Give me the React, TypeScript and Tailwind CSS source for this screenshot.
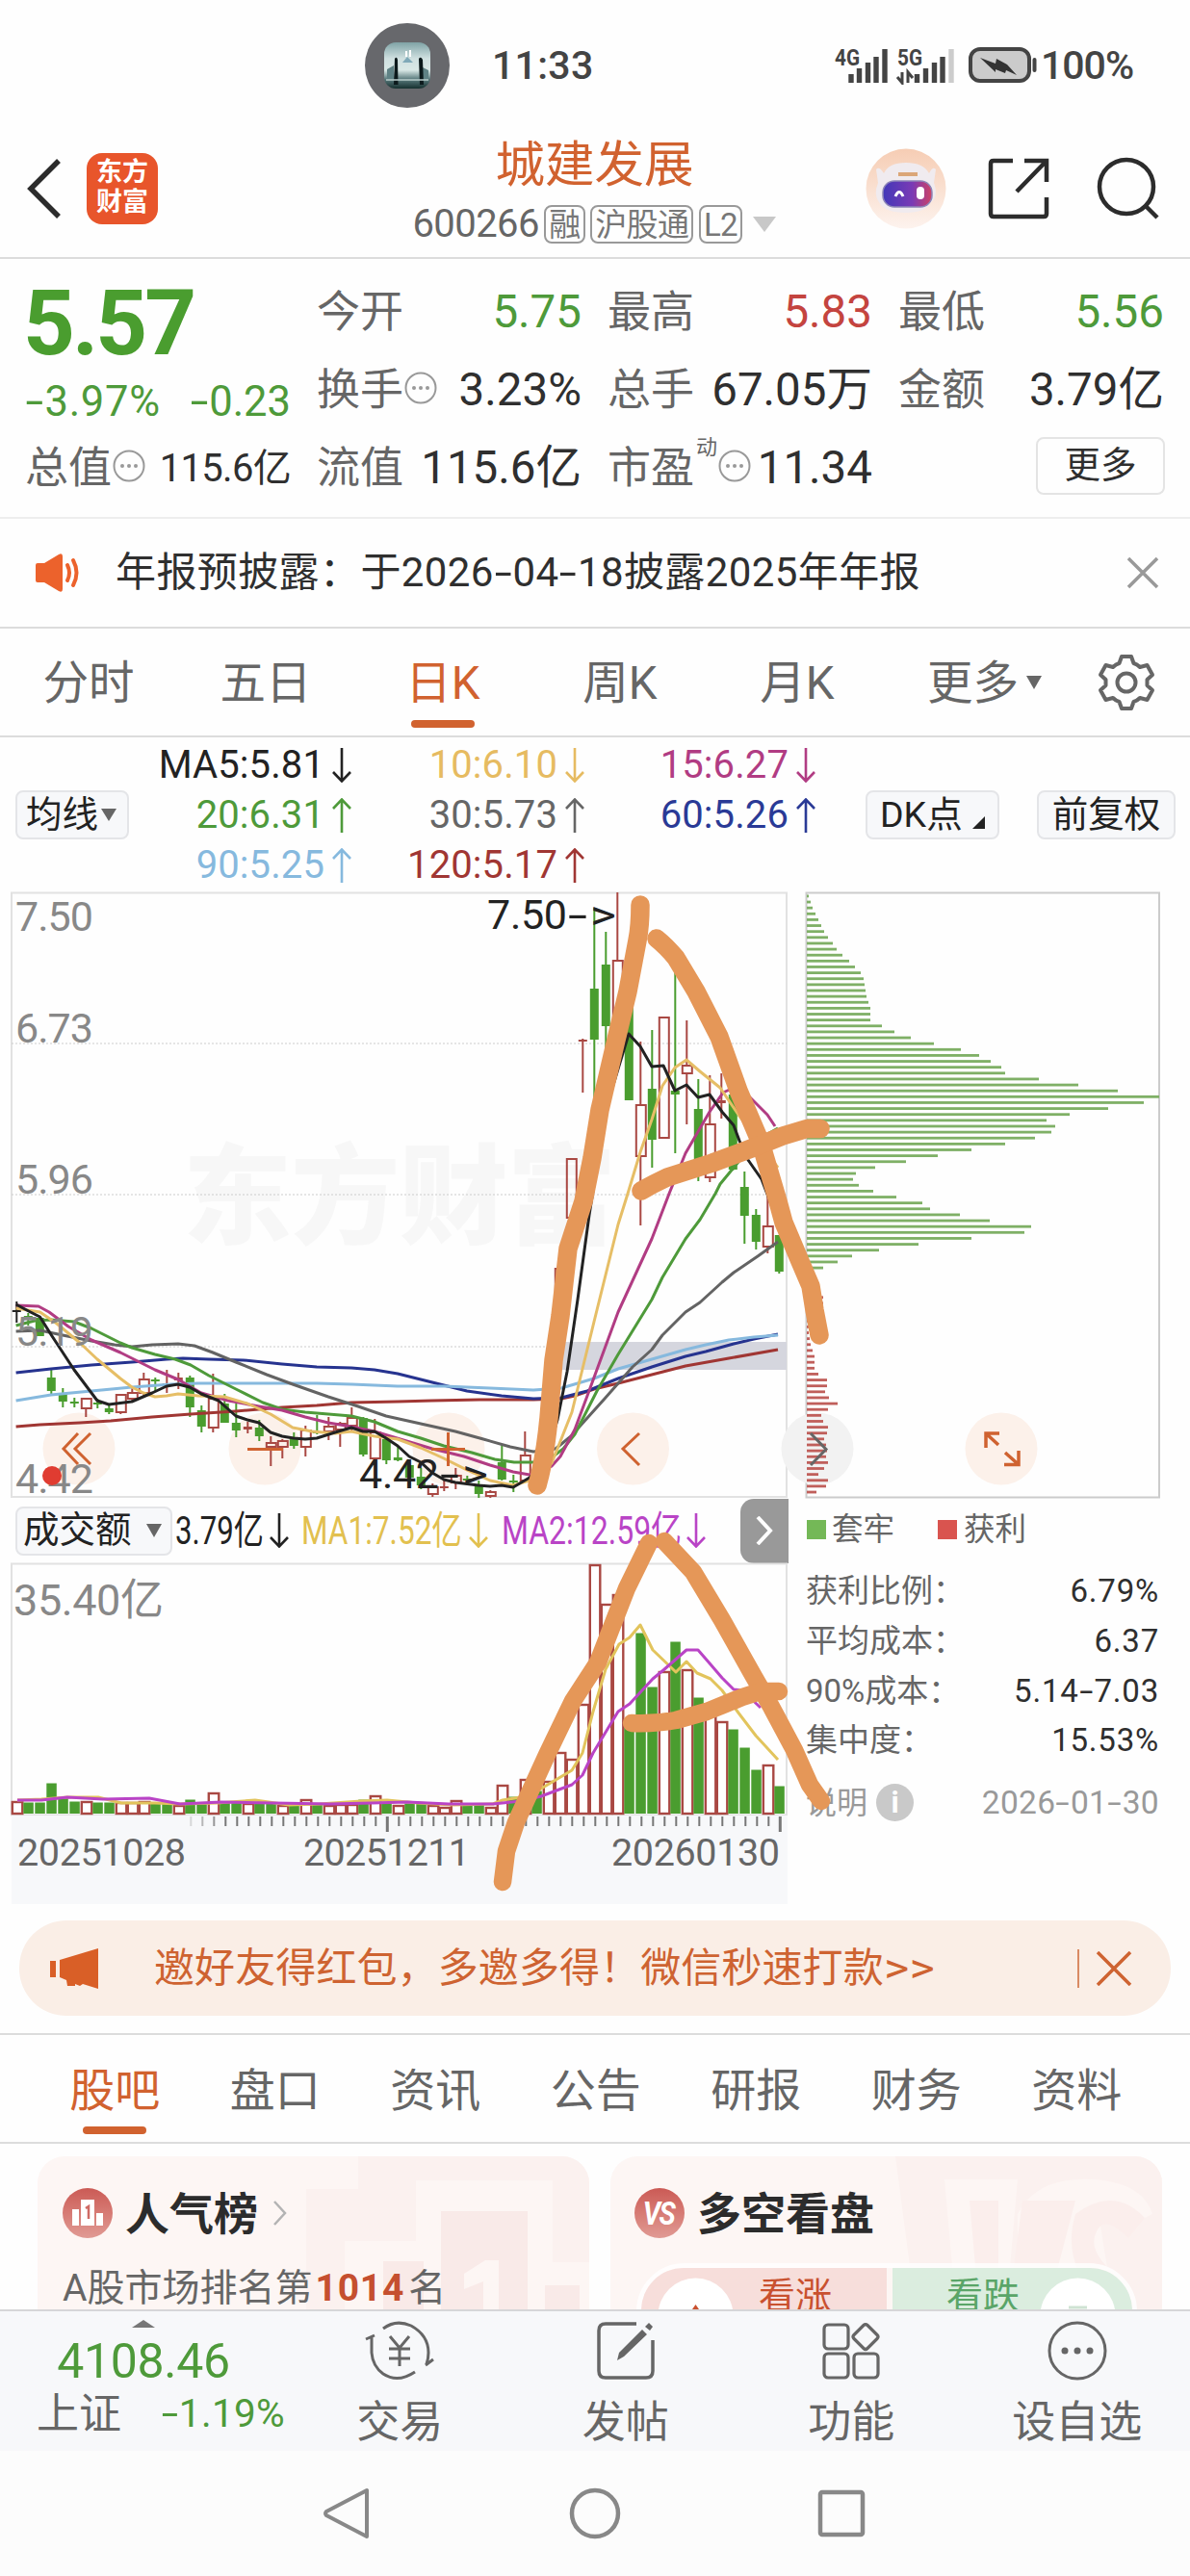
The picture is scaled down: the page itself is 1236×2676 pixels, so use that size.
import React from 'react';

type Dir = 'up' | 'down';
// [kind, high, low, bodyTop, bodyBottom]
type Candle = ['r' | 'g' | 'k', number, number, number, number];

const RED = '#a94843';
const GREEN = '#4a9d2f';
const BRUSH = '#e59758';

const candleX = (i: number) => 17.3 + i * 12;

const candles: (Candle | null)[] = [
  ['k', 1352, 1374, 1361, 1363],
  ['g', 1364, 1377, 1367, 1369],
  ['g', 1368, 1388, 1369, 1388],
  ['g', 1423, 1448, 1431, 1445],
  ['g', 1442, 1462, 1447, 1456],
  ['g', 1452, 1462, 1456, 1458],
  ['r', 1452, 1472, 1453, 1463],
  ['g', 1453, 1463, 1457, 1459],
  ['g', 1460, 1469, 1463, 1467],
  ['r', 1449, 1469, 1449, 1467],
  ['r', 1442, 1455, 1447, 1453],
  ['r', 1426, 1450, 1433, 1447],
  ['g', 1431, 1446, 1433, 1435],
  ['r', 1423, 1447, 1437, 1439],
  ['r', 1426, 1443, 1431, 1434],
  ['g', 1429, 1472, 1431, 1462],
  ['g', 1460, 1488, 1465, 1482],
  ['r', 1427, 1488, 1453, 1483],
  ['g', 1448, 1478, 1458, 1478],
  ['g', 1458, 1493, 1478, 1486],
  ['r', 1477, 1489, 1482, 1485],
  ['g', 1475, 1497, 1483, 1492],
  ['r', 1492, 1523, 1499, 1503],
  ['r', 1495, 1515, 1497, 1503],
  ['g', 1488, 1505, 1495, 1502],
  ['r', 1481, 1513, 1486, 1503],
  ['g', 1470, 1490, 1487, 1489],
  ['r', 1472, 1496, 1482, 1487],
  ['r', 1477, 1503, 1479, 1485],
  ['r', 1462, 1487, 1473, 1481],
  ['g', 1472, 1513, 1473, 1511],
  ['r', 1474, 1516, 1488, 1515],
  ['g', 1493, 1521, 1495, 1517],
  ['g', 1502, 1518, 1514, 1517],
  ['g', 1521, 1543, 1522, 1535],
  ['g', 1525, 1547, 1534, 1543],
  ['r', 1541, 1555, 1545, 1552],
  ['r', 1538, 1549, 1544, 1546],
  ['r', 1525, 1547, 1533, 1540],
  ['g', 1533, 1542, 1536, 1538],
  ['g', 1538, 1556, 1542, 1552],
  ['r', 1548, 1556, 1550, 1554],
  ['g', 1501, 1538, 1519, 1537],
  ['g', 1532, 1550, 1538, 1540],
  ['r', 1487, 1540, 1512, 1538],
  null,
  null,
  ['r', 1318, 1370, 1318, 1370],
  ['r', 1204, 1265, 1204, 1265],
  ['r', 1079, 1135, 1080, 1080],
  ['g', 943, 1145, 1027, 1080],
  ['g', 968, 1092, 1002, 1066],
  ['r', 927, 1060, 998, 1060],
  ['g', 1045, 1143, 1045, 1143],
  ['r', 1082, 1273, 1148, 1201],
  ['g', 1070, 1213, 1131, 1184],
  ['r', 1057, 1182, 1057, 1182],
  ['g', 1005, 1198, 1133, 1137],
  ['r', 1060, 1168, 1107, 1115],
  ['g', 1121, 1227, 1152, 1217],
  ['r', 1117, 1228, 1168, 1223],
  ['r', 1115, 1162, 1143, 1146],
  ['g', 1133, 1216, 1137, 1215],
  ['g', 1217, 1292, 1233, 1263],
  ['g', 1256, 1298, 1262, 1290],
  ['r', 1225, 1302, 1274, 1295],
  ['g', 1283, 1323, 1283, 1321],
];

const maLines: { color: string; points: string }[] = [
  {
    color: '#a03633',
    points:
      '16.6,1482 41.5,1480 83,1478 115,1476 158,1472 198,1469 245,1466 293,1462 329,1460 365,1457 413,1456 449,1455 498,1454 554,1454 583,1453 597,1450 617,1443 642,1437 677,1428 712,1419 757,1411 808,1402',
  },
  {
    color: '#26338f',
    points:
      '16.6,1426 53,1422 95,1418 137,1415 173,1412 190,1411 217,1412 253,1413 293,1417 329,1420 365,1421 389,1423 413,1427 449,1436 485,1445 521,1450 554,1453 583,1452 610,1445 642,1432 677,1420 712,1409 733,1404 762,1396 783,1391 808,1386',
  },
  {
    color: '#86b9de',
    points:
      '16.6,1455 53,1449 95,1445 137,1441 178,1438 206,1437 245,1437 293,1437 329,1437 365,1438 413,1440 461,1440 509,1442 554,1444 583,1442 617,1432 642,1422 677,1412 712,1402 733,1397 757,1392 783,1389 808,1387',
  },
  {
    color: '#636363',
    points:
      '16.6,1383 41.5,1382 65,1387 95,1393 119,1397 137,1399 158,1397 185,1396 202,1398 221,1405 245,1415 277,1428 304,1438 341,1451 372,1461 401,1471 437,1479 473,1487 502,1495 530,1503 554,1508 577,1505 593,1492 610,1473 628,1453 657,1420 677,1402 688,1387 712,1363 727,1353 750,1332 762,1322 787,1305 808,1290',
  },
  {
    color: '#4e9a3a',
    points:
      '16.6,1377 36,1372 53,1371 77,1373 95,1380 125,1395 137,1400 161,1407 182,1412 198,1418 217,1429 245,1443 273,1457 293,1464 317,1467 341,1469 365,1471 389,1477 413,1487 437,1494 461,1502 490,1509 514,1516 534,1519 554,1519 573,1514 585,1505 597,1490 620,1445 642,1407 677,1350 688,1327 712,1287 727,1267 743,1240 748,1230 762,1213 785,1185 808,1172',
  },
  {
    color: '#b13c83',
    points:
      '16.6,1356 40,1357 51,1363 71,1378 95,1392 125,1405 161,1423 185,1433 209,1447 237,1455 269,1461 293,1465 317,1472 341,1478 365,1482 389,1487 419,1496 449,1505 482,1513 509,1522 533,1529 550,1532 573,1523 582,1513 597,1485 610,1450 642,1363 677,1287 695,1240 712,1198 737,1155 751,1135 762,1130 777,1138 797,1158 805,1170',
  },
  {
    color: '#e6be66',
    points:
      '16.6,1359 41.5,1363 59,1375 83,1395 101,1412 125,1432 137,1441 149,1447 161,1451 173,1450 185,1448 206,1450 233,1451 257,1458 281,1469 304,1483 324,1487 348,1489 365,1487 389,1492 413,1495 437,1504 461,1515 485,1527 509,1538 533,1543 550,1538 573,1520 594,1467 617,1373 642,1272 652,1240 665,1197 677,1163 688,1128 701,1109 713,1101 727,1113 748,1130 767,1158 808,1213',
  },
  {
    color: '#222222',
    points:
      '16.6,1355 29.7,1362 41.5,1368 53.4,1387 77,1423 101,1455 113,1459 137,1456 158,1447 173,1440 185,1438 197,1441 209,1448 227,1455 245,1471 257,1475 269,1478 281,1488 293,1492 305,1494 317,1495 329,1494 348,1488 365,1483 377,1487 389,1487 401,1494 413,1502 425,1513 437,1519 449,1530 461,1537 473,1540 497,1543 509,1544 521,1543 533,1545 550,1535 565,1520 579,1475 589,1425 600,1350 612,1262 630,1150 653,1074 665,1087 677,1108 689,1107 701,1133 713,1127 725,1140 737,1137 750,1155 762,1169 768,1185 777,1205 791,1225 809,1272',
  },
];

const volumes: ['r' | 'g', number][] = [
  ['r', 1871], ['g', 1872], ['g', 1872], ['g', 1852], ['g', 1867], ['g', 1871], ['r', 1871], ['g', 1872],
  ['g', 1872], ['r', 1872], ['r', 1872], ['r', 1871], ['g', 1873], ['g', 1872], ['r', 1875], ['g', 1869],
  ['g', 1872], ['r', 1862], ['g', 1871], ['g', 1872], ['r', 1873], ['g', 1873], ['g', 1872], ['r', 1875],
  ['g', 1875], ['r', 1869], ['g', 1873], ['r', 1875], ['r', 1874], ['r', 1874], ['g', 1869], ['r', 1865],
  ['g', 1873], ['r', 1875], ['g', 1873], ['g', 1873], ['r', 1875], ['r', 1877], ['r', 1870], ['g', 1875],
  ['g', 1873], ['r', 1877], ['r', 1854], ['g', 1866], ['r', 1848], ['g', 1860], ['r', 1850], ['r', 1820],
  ['r', 1827], ['r', 1770], ['r', 1625], ['r', 1666], ['r', 1656], ['g', 1790], ['g', 1696], ['g', 1752],
  ['r', 1736], ['g', 1705], ['r', 1734], ['g', 1763], ['r', 1775], ['r', 1788], ['g', 1796], ['g', 1815],
  ['g', 1838], ['r', 1833], ['g', 1855],
];

// bar widths of the cost distribution, top to bottom
const trapped = [
  2, 4, 6, 9, 12, 15, 18, 22, 27, 31, 37, 44, 50, 56, 59, 60, 61, 62, 64, 66, 66, 66, 78, 91, 108, 132, 160, 179,
  191, 202, 206, 241, 282, 323, 366, 350, 313, 273, 249, 258, 254, 237, 206, 171, 136, 103, 71, 51, 48, 54, 69, 93,
  120, 128, 159, 190, 233, 226, 171, 116, 75, 47, 32, 17,
];
const profit = [
  17, 17, 15, 10, 5, 2, 2, 3, 4, 6, 8, 8, 8, 12, 21, 21, 19, 23, 32, 22, 15, 17, 22, 21, 18, 20, 21, 20, 22, 18, 12,
  22, 20, 10,
];

const maLegend: ({ text: string; dir: Dir; color: string } | null)[] = [
  { text: 'MA5:5.81', dir: 'down', color: 'text-[#222]' },
  { text: '10:6.10', dir: 'down', color: 'text-[#e6bb61]' },
  { text: '15:6.27', dir: 'down', color: 'text-[#b13c83]' },
  { text: '20:6.31', dir: 'up', color: 'text-[#4e9a3a]' },
  { text: '30:5.73', dir: 'up', color: 'text-[#666]' },
  { text: '60:5.26', dir: 'up', color: 'text-[#2a3a96]' },
  { text: '90:5.25', dir: 'up', color: 'text-[#86b9de]' },
  { text: '120:5.17', dir: 'up', color: 'text-[#a03633]' },
  null,
];

const Arrow: React.FC<{ dir: Dir }> = ({ dir }) => (
  <svg className="shrink-0" width="22" height="36" viewBox="0 0 22 36" fill="none" stroke="currentColor" strokeWidth="2.6">
    {dir === 'down' ? <path d="M11 0V34M2 25L11 34.5L20 25" /> : <path d="M11 36V2M2 11L11 1.5L20 11" />}
  </svg>
);

// figures with the hyphen widened to the width of a digit dash
const Num: React.FC<{ children: string }> = ({ children }) => (
  <span>
    {children.split('-').map((part, i) => (
      <React.Fragment key={i}>
        {i > 0 && <span className="mx-[0.09em] inline-block scale-x-[1.55]">-</span>}
        {part}
      </React.Fragment>
    ))}
  </span>
);

const Dots = () => (
  <svg width="34" height="34" viewBox="0 0 34 34" className="-mt-1.5 ml-[1px] shrink-0">
    <circle cx="17" cy="17" r="15.500" fill="none" stroke="#999" strokeWidth="2" />
    <circle cx="10" cy="17" r="2" fill="#999" />
    <circle cx="17" cy="17" r="2" fill="#999" />
    <circle cx="24" cy="17" r="2" fill="#999" />
  </svg>
);

const StatusBar = () => (
  <div className="flex h-[136px] items-center pl-[379px] text-[41px] font-medium leading-none text-[#444]">
    <div className="flex h-[88px] w-[88px] items-center justify-center rounded-full bg-[#67686c]">
      <svg width="48" height="48" viewBox="0 0 48 48">
        <defs>
          <linearGradient id="sky" x1="0" y1="0" x2="0" y2="1">
            <stop offset="0" stopColor="#7fa3a6" />
            <stop offset="0.35" stopColor="#cfe0e0" />
            <stop offset="0.6" stopColor="#d9e8e6" />
            <stop offset="0.8" stopColor="#58797b" />
            <stop offset="1" stopColor="#16302f" />
          </linearGradient>
        </defs>
        <rect width="48" height="48" rx="12" fill="url(#sky)" />
        <path d="M3 28L10 24V38H3ZM38 25L46 29V38H40Z" fill="#5f8285" />
        <path d="M19 21L24 15L30 21Z" fill="#7fa9b8" />
        <path d="M23 9V15M27 8V15" stroke="#fff" strokeWidth="2" />
        <path d="M11 17Q13 14 14 18L14.5 44H10ZM36 17Q38 14 40 18L41 44H37Z" fill="#0c1a1c" />
        <path d="M2 39H46" stroke="#b9cccb" strokeWidth="1.5" />
      </svg>
    </div>
    <span className="ml-[44px] w-[108px] whitespace-nowrap tracking-[0.3px]">11:33</span>
    <svg className="ml-[247px]" width="212" height="40" viewBox="866 48 212 40">
      <text x="867" y="68" fontSize="23" fontWeight="700" fill="#444" textLength="26" lengthAdjust="spacingAndGlyphs">4G</text>
      <path d="M884 86V77M892.5 86V71M901.5 86V65M910 86V59M919 86V51" stroke="#444" strokeWidth="5.4" />
      <text x="932" y="68" fontSize="23" fontWeight="700" fill="#444" textLength="26" lengthAdjust="spacingAndGlyphs">5G</text>
      <path d="M937 75V86L932 80M943 86V75L948 81" fill="none" stroke="#444" strokeWidth="3" />
      <path d="M952.5 86V77M961.5 86V71M970.5 86V65M979 86V59" stroke="#444" strokeWidth="5.4" />
      <path d="M988 86V51" stroke="#ccc" strokeWidth="5.4" />
      <rect x="1008" y="51" width="61" height="33" rx="10" fill="#cbcbcb" stroke="#444" strokeWidth="4" />
      <path d="M1018 60L1034 66L1035 61L1046 67L1056 78L1045 73L1044 76L1034 72L1034 75Z" fill="#333" />
      <path d="M1074.500 62V73" stroke="#444" strokeWidth="4" strokeLinecap="round" />
    </svg>
    <span className="ml-[3px] tracking-[-1px]">100%</span>
  </div>
);

const Tag: React.FC<{ children: React.ReactNode }> = ({ children }) => (
  <span className="flex h-10 items-center rounded-lg border-2 border-[#999] px-[3px] text-[33px] leading-none tracking-[-0.6px] text-[#777]">
    {children}
  </span>
);

const Header = () => (
  <header className="flex h-[133px] border-b-2 border-[#dcdcdc]">
    <div className="flex h-[120px] w-[360px] items-center pl-[28px]">
      <svg width="36" height="62" viewBox="0 0 36 62" fill="none" stroke="#2c2c2c" strokeWidth="5.500">
        <path d="M33 2L4 31L33 60" />
      </svg>
      <div className="ml-[26px] flex h-[74px] w-[74px] flex-col items-center justify-center rounded-[16px] bg-[#e8552b] pb-[2px] text-[27px] font-bold leading-[31px] text-white">
        <span>东方</span>
        <span>财富</span>
      </div>
    </div>
    <div className="flex w-[515px] flex-col items-center">
      <h1 className="mt-[6px] h-[67px] text-[51.500px] leading-[60px] text-[#d1622f]">城建发展</h1>
      <div className="flex h-12 items-center gap-[5.500px] text-[40px] leading-none text-[#666]">
        <span className="tracking-[-0.6px]">600266</span>
        <Tag>融</Tag>
        <Tag>沪股通</Tag>
        <Tag>L2</Tag>
        <svg className="ml-1" width="26" height="16" viewBox="0 0 26 16">
          <path d="M1 0H25L13 16Z" fill="#c8c8c8" />
        </svg>
      </div>
    </div>
    <div className="flex h-[120px] w-[361px] items-center pl-[24px]">
      <svg width="84" height="84" viewBox="0 0 84 84">
        <defs>
          <linearGradient id="halo" x1="0" y1="0" x2="0" y2="1">
            <stop offset="0" stopColor="#f6cdb4" />
            <stop offset="1" stopColor="#fdf3ee" />
          </linearGradient>
          <linearGradient id="visor" x1="0" y1="0" x2="1" y2="0">
            <stop offset="0" stopColor="#4238b8" />
            <stop offset="0.6" stopColor="#7a3ab5" />
            <stop offset="1" stopColor="#cf4264" />
          </linearGradient>
        </defs>
        <circle cx="42" cy="42" r="41.500" fill="url(#halo)" />
        <path d="M11 22Q14 18 19 26Q24 15 42 15Q60 15 66 26Q70 18 73 22L71 36Q76 50 68 56Q62 67 42 67Q20 67 14 56Q8 48 13 36Z" fill="#f0ebef" />
        <path d="M34 25H54V29H34Z" fill="#dba678" />
        <rect x="18" y="34" width="51" height="27" rx="12" fill="url(#visor)" stroke="#8d86b8" strokeWidth="1.500" />
        <path d="M31 50Q35 41 39 50" fill="none" stroke="#fff" strokeWidth="3" />
        <rect x="53" y="40" width="8" height="13" rx="4" fill="#fff" />
      </svg>
      <svg className="ml-[43px]" width="64" height="66" viewBox="0 0 64 66" fill="none" stroke="#2c2c2c" strokeWidth="4.500">
        <path d="M26 4H6Q3 4 3 7V59Q3 62 6 62H58Q61 62 61 59V42M38 4H61V26M61 4L30 36" />
      </svg>
      <svg className="ml-[49px]" width="66" height="66" viewBox="0 0 66 66" fill="none" stroke="#2c2c2c" strokeWidth="4.500">
        <circle cx="31" cy="31" r="28" />
        <path d="M51 51L63 63" />
      </svg>
    </div>
  </header>
);

const Stat: React.FC<{ label: React.ReactNode; value: string; color?: string }> = ({
  label,
  value,
  color = 'text-[#2f2f2f]',
}) => (
  <div className="flex h-[81px] items-center justify-between pt-[4px] leading-none">
    <span className="flex items-center text-[45px] text-[#666]">{label}</span>
    <span className={`whitespace-nowrap text-[47.500px] ${color}`}>{value}</span>
  </div>
);

const Quote = () => (
  <section className="flex h-[270px] gap-[27px] border-b-2 border-[#eee] pl-[26px] pt-[13px] whitespace-nowrap">
    <div className="w-[276px]">
      <div className="-ml-[2px] flex h-[108px] items-center text-[94px] font-bold leading-none tracking-[-3px] text-[#4a9d2f]">5.57</div>
      <div className="flex h-[54px] items-center justify-between pt-[2px] text-[43.500px] leading-none text-[#4e9a3a]">
        <span className="tracking-[0.7px]"><Num>-3.97%</Num></span>
        <Num>-0.23</Num>
      </div>
      <div className="flex h-[81px] items-center justify-between pt-[4px] leading-none">
        <span className="flex items-center text-[45px] text-[#666]">总值<Dots /></span>
        <span className="text-[40px] tracking-[-0.7px] text-[#2f2f2f]">115.6亿</span>
      </div>
    </div>
    <div className="w-[275px]">
      <Stat label="今开" value="5.75" color="text-[#4e9a3a]" />
      <Stat label={<>换手<Dots /></>} value="3.23%" />
      <Stat label="流值" value="115.6亿" />
    </div>
    <div className="w-[275px]">
      <Stat label="最高" value="5.83" color="text-[#c4443f]" />
      <Stat label="总手" value="67.05万" />
      <Stat
        label={<>市盈<span className="-mt-11 ml-[2px] text-[22px]">动</span><Dots /></>}
        value="11.34"
      />
    </div>
    <div className="w-[276px]">
      <Stat label="最低" value="5.56" color="text-[#4e9a3a]" />
      <Stat label="金额" value="3.79亿" />
      <div className="-mr-[1px] flex h-[80px] items-center justify-end">
        <button className="h-[60px] w-[134px] rounded-lg border-2 border-[#e4e4e4] text-[37.500px] leading-none text-[#2f2f2f]">更多</button>
      </div>
    </div>
  </section>
);

const Notice = () => (
  <section className="flex h-[114px] items-center border-b-2 border-[#dcdcdc] pl-[36px] pr-[32px]">
    <svg width="50" height="40" viewBox="0 0 50 40">
      <path d="M1 12Q1 10 3 10H10L25 1Q29 -1 29 3V37Q29 41 25 39L10 30H3Q1 30 1 28Z" fill="#ec622c" />
      <path d="M34 12Q38 20 34 28M40 7Q47 20 40 33" fill="none" stroke="#ec622c" strokeWidth="4" strokeLinecap="round" />
    </svg>
    <p className="ml-[34px] whitespace-nowrap text-[42px] leading-none tracking-[0.4px] text-[#2f2f2f]">
      <Num>年报预披露：于2026-04-18披露2025年年报</Num>
    </p>
    <svg className="ml-auto" width="34" height="34" viewBox="0 0 34 34" stroke="#999" strokeWidth="3.500">
      <path d="M2 2L32 32M32 2L2 32" />
    </svg>
  </section>
);

const periods = ['分时', '五日', '日K', '周K', '月K'];

const PeriodTabs = () => (
  <nav className="flex h-[113px] border-b-2 border-[#dcdcdc] text-[47.500px] leading-none text-[#666]">
    {periods.map((p) => (
      <div
        key={p}
        className={`relative flex h-full w-[184px] items-center justify-center pt-[4px] ${p === '日K' ? 'text-[#d1622f]' : ''}`}
      >
        {p}
        {p === '日K' && <span className="absolute bottom-[8px] h-[8px] w-[66px] rounded-full bg-[#d1622f]" />}
      </div>
    ))}
    <div className="ml-[43px] flex items-center pt-[4px]">
      更多
      <svg className="-mt-[4px] ml-[8px]" width="16" height="14" viewBox="0 0 16 14">
        <path d="M0 0H16L8 14Z" fill="#666" />
      </svg>
    </div>
    <svg className="ml-[58px] mt-[26px]" width="60" height="60" viewBox="0 0 60 60" fill="none" stroke="#666" strokeWidth="4" strokeLinejoin="round">
      <path d="M25 3H35L37.500 10Q41 11 44 14L51.500 12L57 22L51.500 27V33L57 38L51.500 48L44 46Q41 49 37.500 50L35 57H25L22.500 50Q19 49 16 46L8.500 48L3 38L8.500 33V27L3 22L8.500 12L16 14Q19 11 22.500 10Z" />
      <circle cx="30" cy="30" r="9.500" />
    </svg>
  </nav>
);

const chip = 'flex h-[51px] items-center rounded-lg border-2 border-[#e4e5e8] bg-[#f7f8fa] text-[37.500px] leading-none text-[#222] whitespace-nowrap';

const MaBar = () => (
  <div className="flex h-[157px] items-center pl-[16px] pt-[4px]">
    <button className={`${chip} w-[118px] pl-[9px]`}>
      均线
      <svg className="ml-[3px]" width="16" height="13" viewBox="0 0 16 13">
        <path d="M0 0H16L8 13Z" fill="#666" />
      </svg>
    </button>
    <div className="grid grid-cols-[232px_242px_240px] text-[40px] leading-none">
      {maLegend.map((item, i) =>
        item ? (
          <div key={i} className={`flex h-[52px] items-center justify-end gap-[7px] whitespace-nowrap tracking-[0.1px] ${item.color}`}>
            {item.text}
            <Arrow dir={item.dir} />
          </div>
        ) : (
          <div key={i} />
        )
      )}
    </div>
    <button className={`${chip} ml-[51px] w-[139px] pl-[13px]`}>
      DK点
      <svg className="ml-[10px] mt-4" width="13" height="13" viewBox="0 0 13 13">
        <path d="M13 0V13H0Z" fill="#222" />
      </svg>
    </button>
    <button className={`${chip} ml-[39px] w-[144px] justify-center`}>前复权</button>
  </div>
);

const CandleChart = () => (
  <svg width="822" height="636" viewBox="0 923 822 636" className="block shrink-0 overflow-visible">
    <text x="190" y="1283" fontSize="113" fontWeight="900" fill="#f7f7f7" textLength="450">东方财富</text>
    <rect x="12" y="927.500" width="805" height="627.500" fill="none" stroke="#e2e2e2" strokeWidth="2" />
    {[1084, 1241, 1399].map((y) => (
      <path key={y} d={`M12 ${y}H817`} stroke="#ccc" strokeWidth="1" strokeDasharray="2 2" />
    ))}
    <rect x="570" y="1394" width="247" height="29" fill="#d5d6de" />
    {[82, 275, 466, 657.5].map((x) => (
      <circle key={x} cx={x} cy="1505" r="37.500" fill="#fcf1ea" />
    ))}
    {candles.map((c, i) => {
      if (!c) return null;
      const [kind, high, low, top, bottom] = c;
      const x = candleX(i);
      const color = kind === 'r' ? RED : kind === 'g' ? GREEN : '#222';
      if (kind === 'r' && bottom - top > 3) {
        return (
          <g key={i} stroke={color} strokeWidth="2" fill="none">
            <path d={`M${x} ${high}V${top}M${x} ${bottom}V${low}`} />
            <rect x={x - 4.5} y={top} width="10" height={bottom - top} />
          </g>
        );
      }
      return (
        <g key={i}>
          <path d={`M${x} ${high}V${low}`} stroke={color} strokeWidth="2" />
          <rect x={x - 4.5} y={top} width="9" height={Math.max(bottom - top, 2)} fill={color} />
        </g>
      );
    })}
    {maLines.map((l) => (
      <polyline key={l.color} points={l.points} fill="none" stroke={l.color} strokeWidth="3" strokeLinejoin="round" />
    ))}
    <g fill="#888" fontSize="43">
      <text x="16" y="967" textLength="81">7.50</text>
      <text x="16" y="1083" textLength="81">6.73</text>
      <text x="16" y="1240" textLength="81">5.96</text>
      <text x="16" y="1398" textLength="81">5.19</text>
      <text x="16" y="1551" textLength="81">4.42</text>
    </g>
    {[
      { x: 506, y: 965, value: '7.50' },
      { x: 373, y: 1546, value: '4.42' },
    ].map((m) => (
      <text key={m.value} y={m.y} fontSize="43" fill="#222">
        <tspan x={m.x} textLength="83">{m.value}</tspan>
        <tspan x={m.x + 84} textLength="20" lengthAdjust="spacingAndGlyphs">-</tspan>
        <tspan x={m.x + 107} textLength="27" lengthAdjust="spacingAndGlyphs">{'>'}</tspan>
      </text>
    ))}
    <g fill="none" stroke="#cf6230" strokeWidth="3">
      <path d="M81 1489L66 1505L81 1521M94 1489L78 1505L94 1521M257 1505.500H294M448 1505.500H483M465.500 1488V1523M664 1489L647 1505L664 1522" />
    </g>
    <circle cx="54" cy="1533" r="10" fill="#e03c31" />
  </svg>
);

const CostChart = () => (
  <svg width="414" height="636" viewBox="822 923 414 636" className="block shrink-0 overflow-visible">
    <path d="M837.500 927.500H1204V1555.500H837.500Z" fill="none" stroke="#ccc" strokeWidth="2" />
    <circle cx="849" cy="1505" r="37.500" fill="#f2f2f2" />
    {trapped.map((w, i) => (
      <rect key={i} x="838" y={929.5 + i * 6.13} width={w} height="2.800" fill="#7fb066" />
    ))}
    {profit.map((w, i) => (
      <rect key={i} x="838" y={929.5 + (i + 68) * 6.13} width={w} height="2.800" fill="#c05f5b" />
    ))}
    <path d="M842 1489L858 1505.500L842 1522" fill="none" stroke="#666" strokeWidth="3" />
    <circle cx="1040" cy="1505" r="37.500" fill="#fcf1ea" />
    <path d="M1038 1489H1024V1504M1024 1489L1037 1501M1058 1507V1521.500H1043M1058 1521.500L1044 1509" fill="none" stroke="#cf6230" strokeWidth="3.500" />
  </svg>
);

const VolumeHeader = () => (
  <div className="flex h-[64px] items-center pb-[2px] pl-[16px] text-[41px] leading-none whitespace-nowrap">
    <button className={`${chip} w-[163px] pl-[6px]`}>
      成交额
      <svg className="ml-[15px]" width="16" height="14" viewBox="0 0 16 14">
        <path d="M0 0H16L8 14Z" fill="#666" />
      </svg>
    </button>
    <span className="ml-[3px] flex items-center text-[#222]">
      <span className="w-[97px]"><span className="inline-block origin-left scale-x-[0.76]">3.79亿</span></span>
      <Arrow dir="down" />
    </span>
    <span className="ml-[12px] flex items-center text-[#e2c04f]">
      <span className="w-[173px]"><span className="inline-block origin-left scale-x-[0.77]">MA1:7.52亿</span></span>
      <Arrow dir="down" />
    </span>
    <span className="ml-[13px] flex items-center text-[#b944c6]">
      <span className="w-[191px]"><span className="inline-block origin-left scale-x-[0.78]">MA2:12.59亿</span></span>
      <Arrow dir="down" />
    </span>
    <div className="ml-auto flex h-[67px] w-[50px] shrink-0 items-center justify-center rounded-l-[14px] bg-[#999]">
      <svg width="18" height="30" viewBox="0 0 18 30" fill="none" stroke="#fff" strokeWidth="4">
        <path d="M2 1L15 15L2 29" />
      </svg>
    </div>
  </div>
);

const VolumeChart = () => (
  <svg width="819" height="356" viewBox="0 1622 819 356" className="block">
    <rect x="12" y="1623.500" width="805" height="261" fill="none" stroke="#e2e2e2" strokeWidth="2" />
    <rect x="12" y="1885" width="806" height="92" fill="#f7f8fa" />
    <text x="14" y="1677" fontSize="45" fill="#888" textLength="156">35.40亿</text>
    {volumes.map(([kind, top], i) => {
      const x = candleX(i) + 0.5;
      return kind === 'r' ? (
        <rect key={i} x={x - 5} y={top} width="10.500" height={1883 - top} fill="#fff" stroke={RED} strokeWidth="2.400" />
      ) : (
        <rect key={i} x={x - 5.5} y={top - 0.5} width="10.500" height={1883.5 - top} fill={GREEN} />
      );
    })}
    <g fill="none" strokeWidth="3" strokeLinejoin="round">
      <polyline
        stroke="#e2c45c"
        points="18,1869 43,1868 70,1866 102,1866 126,1872 161,1872 187,1873 225,1872 265,1869 300,1874 332,1873 375,1870 402,1869 434,1872 471,1874 512,1873 522,1869 541,1866 562,1857 594,1838 605,1820 616,1777 629,1733 643,1707 654,1700 665,1687 678,1713 702,1736 713,1725 724,1737 738,1743 750,1755 766,1777 785,1802 808,1827"
      />
      <polyline
        stroke="#b944c6"
        points="18,1869 43,1869 70,1866 107,1868 155,1867 187,1873 230,1871 284,1872 343,1873 386,1872 423,1871 466,1873 512,1873 541,1870 562,1865 594,1853 605,1843 616,1820 642,1777 654,1769 678,1743 689,1734 713,1713 725,1713 738,1728 750,1742 762,1754 771,1755 790,1773"
      />
    </g>
    {volumes.map((_, i) =>
      i > 14 ? (
        <path
          key={i}
          d={`M${candleX(i) + 1} 1886V${i === 32 || i === 66 ? 1902 : 1896}`}
          stroke="#777"
          strokeWidth={i === 32 || i === 66 ? 3 : 2}
          opacity={i < 18 ? (i - 14) * 0.25 : 1}
        />
      ) : null
    )}
    <g fill="#666" fontSize="39.500">
      <text x="18" y="1937" textLength="175">20251028</text>
      <text x="315" y="1937" textLength="173">20251211</text>
      <text x="635" y="1937" textLength="175">20260130</text>
    </g>
  </svg>
);

const costRows = [
  ['获利比例：', '6.79%'],
  ['平均成本：', '6.37'],
  ['90%成本：', '5.14-7.03'],
  ['集中度：', '15.53%'],
];

const CostStats = () => (
  <div className="w-[417px] pl-[18px] pr-[32px] text-[33px] leading-none text-[#666]">
    <div className="flex h-[60px] items-center">
      <span className="ml-[1px] h-5 w-5 bg-[#74b857]" />
      <span className="ml-[6px] text-[32.500px]">套牢</span>
      <span className="ml-[45px] h-5 w-5 bg-[#d9544f]" />
      <span className="ml-[7px] text-[32.500px]">获利</span>
    </div>
    <div className="mt-[8px]">
      {costRows.map(([label, value]) => (
        <div key={label} className="flex h-[51.700px] items-center justify-between">
          <span>{label}</span>
          <span className="tracking-[0.8px] text-[#2f2f2f]"><Num>{value}</Num></span>
        </div>
      ))}
    </div>
    <div className="mt-[12px] flex h-[54px] items-center text-[#999]">
      <span className="text-[32px]">说明</span>
      <span className="ml-[9px] flex h-[39px] w-[39px] items-center justify-center rounded-full bg-[#c9c9c9] text-[31px] font-bold text-white">i</span>
      <span className="ml-auto text-[33.500px] tracking-[0.3px]"><Num>2026-01-30</Num></span>
    </div>
  </div>
);

// hand-drawn marker strokes on top of both charts
const Marker = () => (
  <svg
    width="1236"
    height="1212"
    viewBox="0 766 1236 1212"
    className="pointer-events-none absolute left-0 top-0"
    fill="none"
    stroke={BRUSH}
    strokeWidth="19.500"
    strokeLinecap="round"
    strokeLinejoin="round"
  >
    <path d="M665 940Q665 962 662 977L652 1030L640 1080L623 1153L615 1203L606 1248L590 1297L582 1367L575 1413L570 1473Q566 1515 558 1543" />
    <path d="M682 975Q692 983 702 995L723 1030L747 1077L767 1133L790 1187L808 1248L814 1270L830 1308L842 1336L846 1361L851 1387" />
    <path d="M666 1237Q678 1230 693 1223L740 1208L783 1192L813 1180L838 1172.500L852 1172.500" />
    <path strokeWidth="18.500" d="M522 1955L526 1923L536 1893L568 1823L595 1767L621 1727L651 1650L674 1603" />
    <path strokeWidth="18.500" d="M690 1601L720 1633L750 1683L782 1740L801 1773L825 1818L841 1854L853 1871" />
    <path strokeWidth="18.500" d="M656 1790Q680 1791 702 1787L734 1778L771 1763L790 1757H809" />
  </svg>
);

const Charts = () => (
  <section className="relative h-[1211px]">
    <MaBar />
    <div className="flex">
      <CandleChart />
      <CostChart />
    </div>
    <div className="flex">
      <div className="w-[819px]">
        <VolumeHeader />
        <VolumeChart />
      </div>
      <CostStats />
    </div>
    <Marker />
  </section>
);

const Promo = () => (
  <div className="mx-[20px] mt-[18px] flex h-[99px] items-center rounded-[49px] bg-[#faeee6] pl-[32px] pr-[40px] text-[#ce6331]">
    <svg width="52" height="44" viewBox="0 0 52 44" fill="#d95f27">
      <path d="M0 14H6V31H0ZM10 13L50 1V43L34 38L31 40L26 38V40H18L17 34L10 31Z" />
    </svg>
    <p className="ml-[56px] whitespace-nowrap text-[42px] leading-none tracking-[0.1px]">
      邀好友得红包，多邀多得！微信秒速打款<span className="inline-block origin-left scale-x-[1.2]">&gt;&gt;</span>
    </p>
    <span className="ml-auto h-[40px] w-[2px] bg-[#d98a63]" />
    <svg className="ml-[17px]" width="38" height="36" viewBox="0 0 38 36" stroke="#ce6331" strokeWidth="3.500">
      <path d="M2 1L36 35M36 1L2 35" />
    </svg>
  </div>
);

const sections = ['股吧', '盘口', '资讯', '公告', '研报', '财务', '资料'];

const SectionTabs = () => (
  <nav className="mt-[18px] flex h-[115px] border-y-2 border-[#dcdcdc] pl-[36px] text-[47px] leading-none text-[#666]">
    {sections.map((s, i) => (
      <div
        key={s}
        className={`relative flex w-[166.500px] items-center justify-center pt-[3px] ${i === 0 ? 'text-[#d1622f]' : ''}`}
      >
        {s}
        {i === 0 && <span className="absolute bottom-[8px] h-[8px] w-[66px] rounded-full bg-[#d1622f]" />}
      </div>
    ))}
  </nav>
);

const badge = 'flex h-[52px] w-[52px] items-center justify-center rounded-full bg-linear-to-b from-[#cb5a55] to-[#e09a94]';

const Cards = () => (
  <div className="flex h-[172px] gap-[22px] overflow-hidden pl-[39px] pt-[13px]">
    <div className="relative h-[220px] w-[573px] shrink-0 overflow-hidden rounded-[28px] bg-[#fdf6f4] pl-[26px]">
      <svg className="absolute right-0 top-0" width="300" height="160" viewBox="0 0 300 160">
        <path d="M6 34H60V0H300V160H6Z" fill="#fbf1ef" />
        <path d="M46 88H120V25H262V110H300V160H46Z" fill="#fdf6f4" />
        <path d="M146 57H236V160H146ZM86 109H128V160H86ZM254 134H290V160H254Z" fill="#f9eae8" />
        <path d="M170 122L192 108H206V160H190V130L170 138Z" fill="#fdf6f4" />
      </svg>
      <div className="relative flex h-[118px] items-center">
        <div className={badge}>
          <svg width="34" height="28" viewBox="0 0 34 28" fill="#fff">
            <path d="M1 10H8V27H1ZM10 0H24V27H10ZM26 14H33V27H26Z" />
            <path d="M15 9L18 7V20" fill="none" stroke="#cf6a64" strokeWidth="2.500" />
          </svg>
        </div>
        <span className="ml-[13px] pt-[2px] text-[46px] font-bold leading-none text-[#2c2c2c]">人气榜</span>
        <svg className="ml-[15px]" width="16" height="26" viewBox="0 0 16 26" fill="none" stroke="#b3b3b3" strokeWidth="2.500">
          <path d="M2 1L13 13L2 25" />
        </svg>
      </div>
      <p className="relative whitespace-nowrap text-[39px] leading-[39px] text-[#666]">
        A股市场排名第<b className="pl-[3px] pr-[4px] tracking-[0.8px] text-[#c54f2f]">1014</b>名
      </p>
    </div>
    <div className="relative h-[220px] w-[573px] shrink-0 overflow-hidden rounded-[28px] bg-[#fdf6f4] pl-[25px]">
      <svg className="absolute right-0 top-0" width="280" height="160" viewBox="0 0 280 160">
        <path d="M3 0H280V160H24Z" fill="#fbf1ef" />
        <path d="M54 24H130L118 160H66ZM130 60Q150 20 210 24Q260 28 270 60L250 70Q230 58 215 66L230 160H130Z" fill="#fdf6f4" />
        <path d="M80 46H110V160H90ZM135 46H190L160 160H120ZM190 60Q230 30 262 64L245 85Q220 60 212 78Q200 100 240 130L215 150Q175 110 190 60Z" fill="#fbeeec" />
      </svg>
      <div className="relative flex h-[118px] items-center">
        <div className={`${badge} pr-[3px]`}>
          <span className="inline-block scale-x-[0.85] text-[34px] font-bold italic leading-none tracking-[-2px] text-white">VS</span>
        </div>
        <span className="ml-[13px] pt-[2px] text-[46px] font-bold leading-none text-[#2c2c2c]">多空看盘</span>
      </div>
      <div className="relative -mt-[7px] ml-[2px] flex h-[100px] w-[520px] gap-[6px] rounded-t-[50px] border-[5px] border-white/80 text-[38px] leading-none">
        <div className="flex w-[255px] rounded-tl-[44px] bg-[#f7dedb] pl-[17px] pt-[10px] text-[#c9512f]">
          <svg width="79" height="79" viewBox="0 0 79 79">
            <circle cx="39.500" cy="39.500" r="39" fill="#fff" />
            <path d="M39.500 28L48 40H31Z" fill="#c9512f" />
          </svg>
          <span className="ml-[26px]">看涨</span>
        </div>
        <div className="flex w-[249px] rounded-tr-[44px] bg-[#dbeddf] pl-[56px] pt-[10px] text-[#5aa568]">
          <span>看跌</span>
          <svg className="ml-[21px]" width="79" height="79" viewBox="0 0 79 79">
            <circle cx="39.500" cy="39.500" r="39" fill="#fff" />
            <path d="M30 31H49" stroke="#cfe3d3" strokeWidth="3" />
          </svg>
        </div>
      </div>
    </div>
  </div>
);

const actions = [
  {
    label: '交易',
    icon: (
      <svg width="72" height="64" viewBox="0 0 72 64" fill="none" stroke="#666" strokeWidth="3">
        <path d="M7 17V34Q8 48 19 56Q34 66 52 54M19 9Q32 -1 48 6Q66 16 66 34Q66 40 64 46M1 20L10 16M63 47L71 41" />
        <path d="M26 17L36 29L46 17M36 29V48M25 30H47M25 40H47" />
      </svg>
    ),
  },
  {
    label: '发帖',
    icon: (
      <svg width="62" height="64" viewBox="0 0 62 64" fill="none" stroke="#666" strokeWidth="3.500">
        <path d="M42 4H10Q3 4 3 11V53Q3 60 10 60H52Q59 60 59 53V21" />
        <path d="M22 42L24 34L48 10L53 15L29 38ZM51 7L55 3L59 7L56 11Z" fill="#666" stroke="none" />
      </svg>
    ),
  },
  {
    label: '功能',
    icon: (
      <svg width="60" height="60" viewBox="0 0 60 60" fill="none" stroke="#666" strokeWidth="3.200">
        <rect x="2" y="3" width="25" height="25" rx="4" />
        <rect x="2" y="33" width="25" height="25" rx="4" />
        <rect x="33" y="33" width="25" height="25" rx="4" />
        <path d="M43 3.500Q45 1.500 47 3.500L57 13.500Q59 15.500 57 17.500L47 27.500Q45 29.500 43 27.500L33 17.500Q31 15.500 33 13.500Z" />
      </svg>
    ),
  },
  {
    label: '设自选',
    icon: (
      <svg width="62" height="62" viewBox="0 0 62 62">
        <circle cx="31" cy="31" r="29" fill="none" stroke="#666" strokeWidth="3" />
        <circle cx="18" cy="31" r="3.500" fill="#666" />
        <circle cx="31" cy="31" r="3.500" fill="#666" />
        <circle cx="44" cy="31" r="3.500" fill="#666" />
      </svg>
    ),
  },
];

const BottomBar = () => (
  <footer className="flex h-[147px] border-t-2 border-[#d6d6d8] bg-[#f7f8fa]">
    <div className="flex w-[298px] flex-col items-center whitespace-nowrap leading-none text-[#4e9a3a]">
      <svg className="mt-[9px]" width="24" height="8" viewBox="0 0 24 8">
        <path d="M0 8L12 0L24 8Z" fill="#777" />
      </svg>
      <span className="mt-[10px] h-[54px] text-[50px] tracking-[-0.3px]">4108.46</span>
      <div className="ml-[36px] flex h-[51px] w-[258px] items-center justify-between">
        <span className="text-[44px] text-[#666]">上证</span>
        <span className="text-[40.500px] tracking-[0.3px]"><Num>-1.19%</Num></span>
      </div>
    </div>
    {actions.map((a) => (
      <div key={a.label} className="flex w-[234.500px] flex-col items-center">
        <div className="mt-[9px] flex h-[64px] items-center">{a.icon}</div>
        <span className="mt-[16px] text-[45px] leading-[54px] text-[#666]">{a.label}</span>
      </div>
    ))}
  </footer>
);

const SystemNav = () => (
  <div className="flex h-[130px] items-center bg-[#fcfcfc] pl-[336px]">
    <svg width="48" height="54" viewBox="0 0 48 54" fill="none" stroke="#888" strokeWidth="4" strokeLinejoin="round">
      <path d="M45 3V51L3 29Q1 27 3 25Z" />
    </svg>
    <svg className="ml-[207px]" width="54" height="54" viewBox="0 0 54 54" fill="none" stroke="#888" strokeWidth="4.500">
      <circle cx="27" cy="27" r="24" />
    </svg>
    <svg className="ml-[204px]" width="50" height="50" viewBox="0 0 50 50" fill="none" stroke="#888" strokeWidth="4.500">
      <rect x="3" y="3" width="44" height="44" rx="2" />
    </svg>
  </div>
);

const App: React.FC = () => {
  return (
    <div className="h-[2676px] w-[1236px] overflow-hidden bg-[#fefefe] [font-family:Roboto,'Noto_Sans_CJK_SC',sans-serif]">
      <StatusBar />
      <Header />
      <Quote />
      <Notice />
      <PeriodTabs />
      <Charts />
      <Promo />
      <SectionTabs />
      <Cards />
      <BottomBar />
      <SystemNav />
    </div>
  );
};

export default App;
